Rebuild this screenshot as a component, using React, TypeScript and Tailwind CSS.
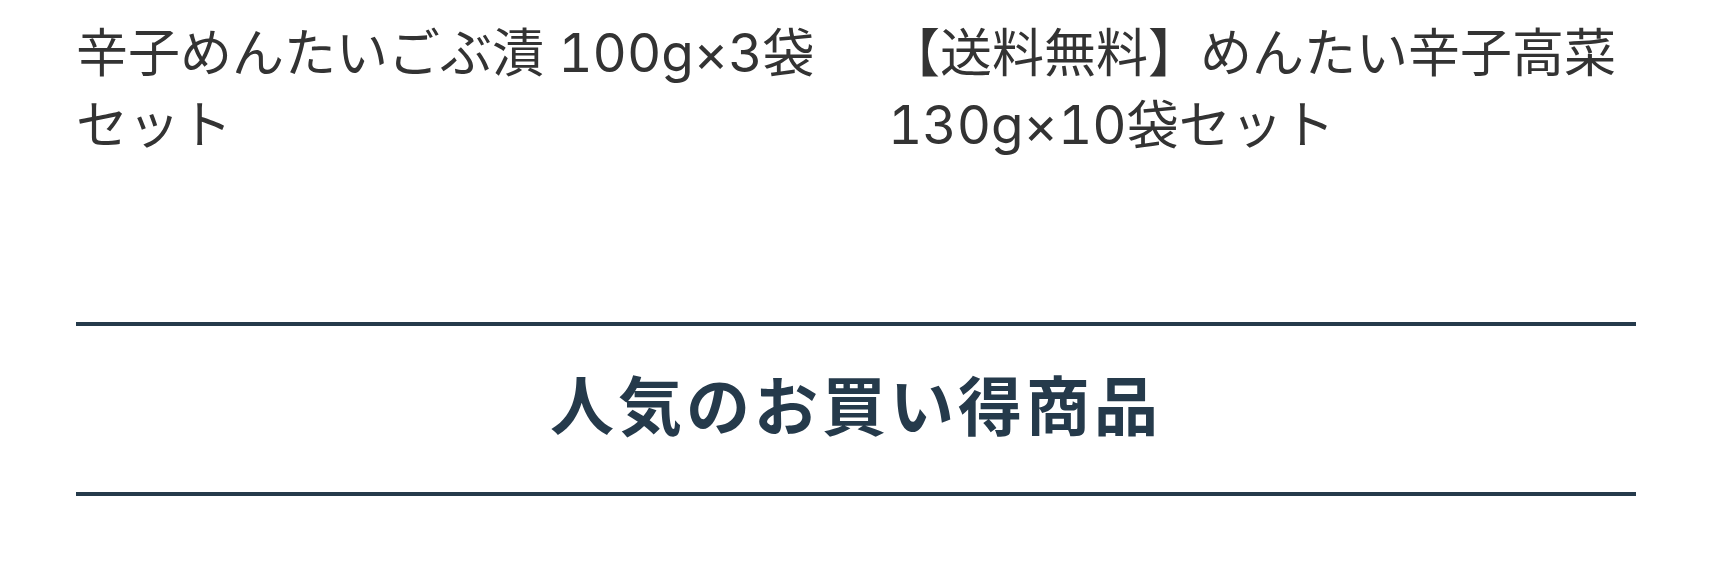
const products = [
  { id: 1, name: '辛子めんたいごぶ漬 100g×3袋セット' },
  { id: 2, name: '【送料無料】めんたい辛子高菜130g×10袋セット' },
];

// Quantities (100g×3) are set in a rounder, slightly larger latin face
function ProductName({ name }: { name: string }) {
  const parts = name.split(/([ \dg×]+)/);

  return (
    <li>
      <a href="#" className="block text-[52px] leading-[72px] break-all text-[#333333]">
        {parts.map((part, i) =>
          i % 2 === 1 ? (
            <span key={i} className="font-['Inter',sans-serif] text-[53px] leading-none tabular-nums">
              {part}
            </span>
          ) : (
            part
          )
        )}
      </a>
    </li>
  );
}

export default function App() {
  return (
    <main className="bg-white pt-3.5 pr-[78px] pb-16 pl-[76px] font-['Noto_Sans_CJK_JP',sans-serif]">
      <ul className="grid grid-cols-2 gap-x-16">
        {products.map((product) => (
          <ProductName key={product.id} name={product.name} />
        ))}
      </ul>

      <h2 className="mt-[164px] border-y-4 border-[#253a4b] pt-7 pb-[42px] text-center text-[64px] leading-[96px] font-bold tracking-[4px] text-[#253a4b]">
        人気のお買い得商品
      </h2>
    </main>
  );
}
